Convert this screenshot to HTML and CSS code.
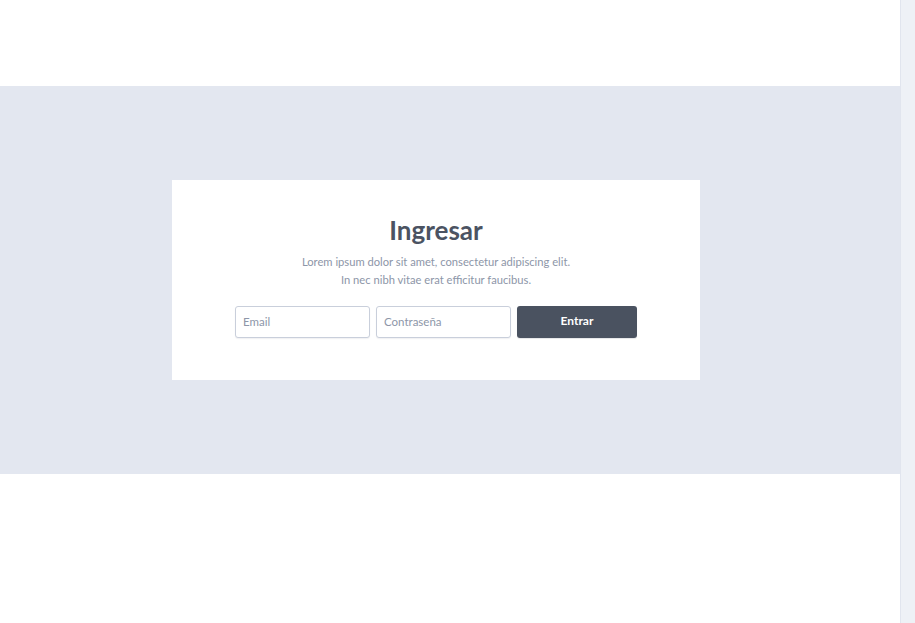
FILE: index.html
```html
<!DOCTYPE html>
<html lang="es">
<head>
<meta charset="utf-8">
<title>Ingresar</title>
<link rel="stylesheet" href="styles.css">
</head>
<body>
<div class="frame">
  <main class="page">
    <div class="top"></div>
    <section class="band">
      <div class="card">
        <h1 class="title">Ingresar</h1>
        <p class="lead">Lorem ipsum dolor sit amet, consectetur adipiscing elit.<br>In nec nibh vitae erat efficitur faucibus.</p>
        <form class="form">
          <input class="field" type="email" placeholder="Email">
          <input class="field" type="password" placeholder="Contraseña">
          <button class="btn" type="button">Entrar</button>
        </form>
      </div>
    </section>
    <div class="bottom"></div>
  </main>
  <div class="scrollbar"></div>
</div>
</body>
</html>
```
FILE: styles.css
```css
html, body {
  margin: 0;
  padding: 0;
  overflow: hidden;
}
body {
  font-family: Lato, "Open Sans", sans-serif;
  background: #fff;
  color: #4a5260;
}
.frame {
  display: flex;
  height: 623px;
}
.page {
  width: 900px;
  flex: none;
}
.scrollbar {
  flex: 1;
  background: #eef1f6;
  border-left: 1px solid #e1e5ee;
}
.top {
  height: 86px;
}
.band {
  background: #e3e7f0;
  padding: 94px 0;
}
.card {
  width: 528px;
  margin-left: 172px;
  background: #fff;
  box-sizing: border-box;
  height: 200px;
  padding-top: 34px;
  text-align: center;
}
.title {
  margin: 0;
  font-size: 26px;
  line-height: 33px;
  font-weight: 700;
  color: #4b5362;
}
.lead {
  margin: 6px 0 0;
  font-size: 11.2px;
  line-height: 18px;
  color: #8d96a8;
}
.form {
  display: flex;
  justify-content: center;
  gap: 6px;
  margin-top: 17px;
}
.field {
  box-sizing: border-box;
  width: 135px;
  height: 32px;
  border: 1px solid #c9cfdb;
  border-radius: 3px;
  padding: 0 7px 2px;
  font-family: inherit;
  font-size: 11.5px;
  color: #4b5362;
  background: #fff;
  outline: none;
  box-shadow: 0 1px 1px rgba(74, 82, 96, 0.08);
}
.field::placeholder {
  color: #8d96a8;
}
.btn {
  box-sizing: border-box;
  width: 120px;
  height: 32px;
  border: none;
  border-radius: 3px;
  padding: 0 0 3px;
  background: #4a5260;
  color: #fff;
  font-family: inherit;
  font-size: 12px;
  font-weight: 700;
  cursor: pointer;
  box-shadow: 0 1px 1px rgba(74, 82, 96, 0.15);
}
```
